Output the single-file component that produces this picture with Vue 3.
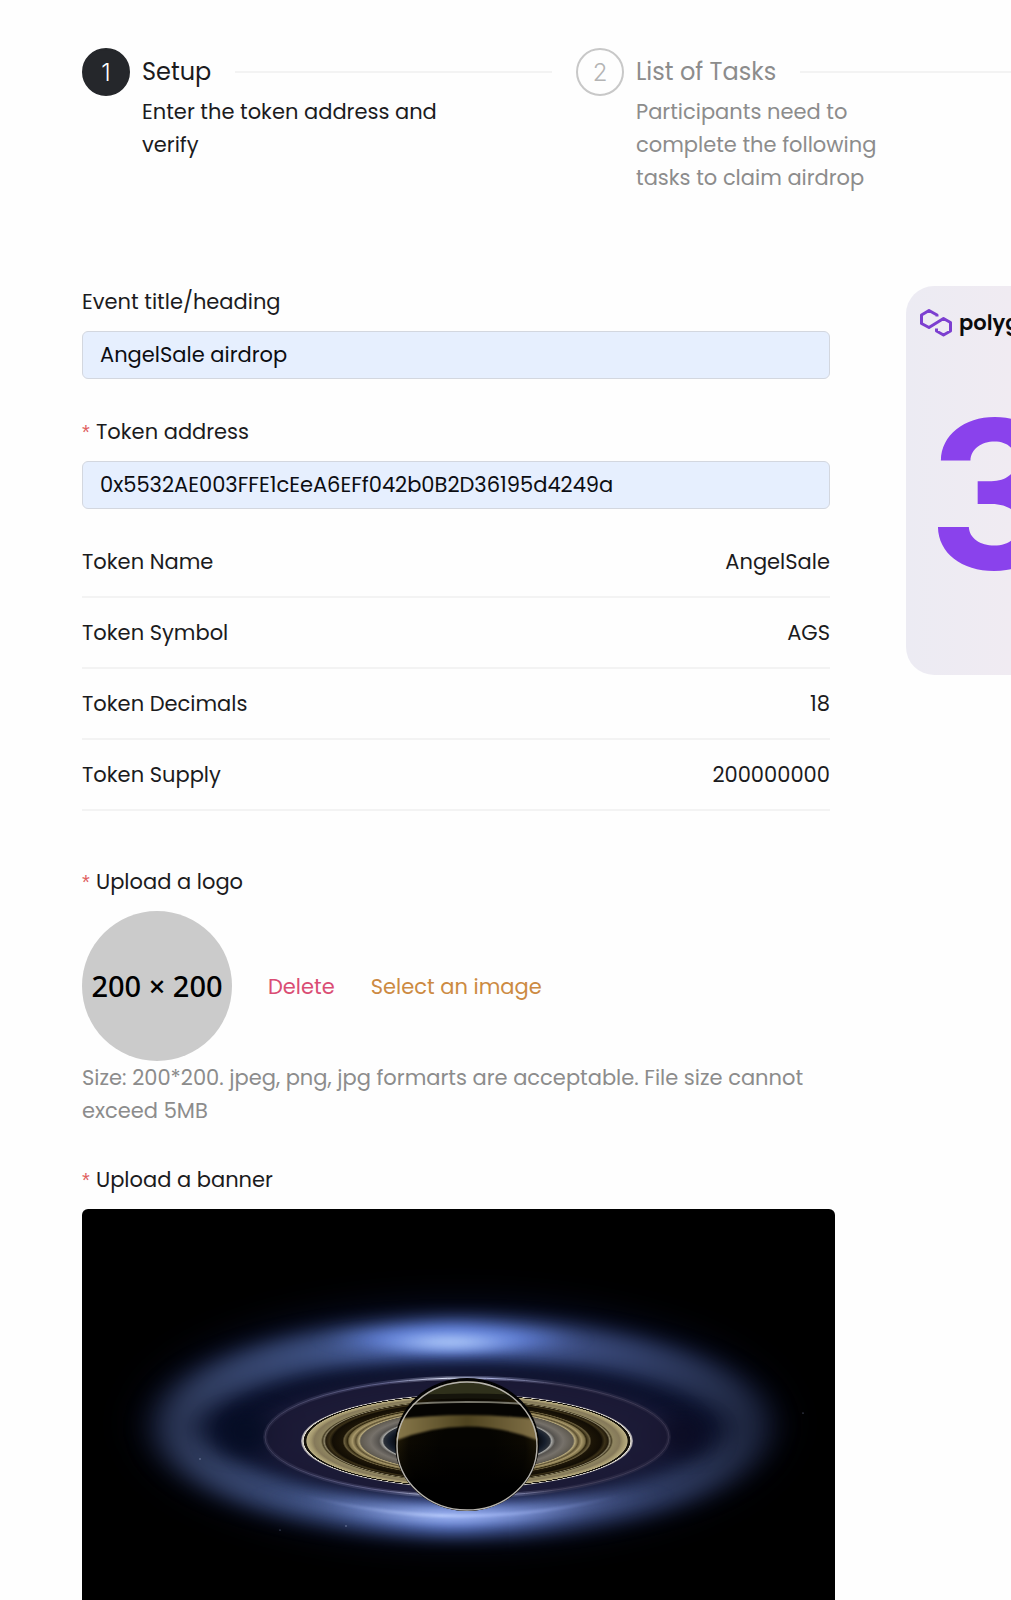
<script setup>
import { ref } from 'vue'

const eventTitle = ref('AngelSale airdrop')
const tokenAddress = ref('0x5532AE003FFE1cEeA6EFf042b0B2D36195d4249a')

const steps = [
  { title: 'Setup', text: 'Enter the token address and verify', active: true },
  {
    title: 'List of Tasks',
    text: 'Participants need to complete the following tasks to claim airdrop',
    active: false
  }
]

const tokenInfo = [
  { name: 'Token Name', value: 'AngelSale' },
  { name: 'Token Symbol', value: 'AGS' },
  { name: 'Token Decimals', value: '18' },
  { name: 'Token Supply', value: '200000000' }
]

// Radial profile of the planet's main rings: [radius, colour]
const ringStops = [
  [0.42, '#05070c'],
  [0.47, '#161e2c'],
  [0.5, '#2b3038'],
  [0.51, '#a5a5a2'],
  [0.53, '#55524e'],
  [0.58, '#76716a'],
  [0.64, '#5f5a50'],
  [0.65, '#b7a97c'],
  [0.67, '#5c5031'],
  [0.69, '#a8986a'],
  [0.71, '#7d7048'],
  [0.72, '#30270f'],
  [0.74, '#6b5f3e'],
  [0.75, '#1c1507'],
  [0.81, '#120d04'],
  [0.83, '#3b3118'],
  [0.85, '#241c0c'],
  [0.86, '#8d8568'],
  [0.87, '#4a4128'],
  [0.88, '#8f8560'],
  [0.92, '#85795a'],
  [0.94, '#a2966c'],
  [0.965, '#b8ad82'],
  [0.97, '#15120b'],
  [0.982, '#15120b'],
  [0.986, '#e8e4d8'],
  [1, '#8c8997']
]
</script>

<template>
  <div class="page">
    <ol class="steps">
      <li v-for="(step, i) in steps" :key="step.title" class="step" :class="{ active: step.active }">
        <span class="step-number">{{ i + 1 }}</span>
        <div class="step-body">
          <div class="step-head">
            <span class="step-title">{{ step.title }}</span>
            <span class="step-rail"></span>
          </div>
          <p class="step-text">{{ step.text }}</p>
        </div>
      </li>
    </ol>

    <main class="content">
      <form class="form" @submit.prevent>
        <div class="field">
          <label class="label" for="event-title">Event title/heading</label>
          <input id="event-title" v-model="eventTitle" class="input" type="text" />
        </div>

        <div class="field">
          <label class="label required" for="token-address">Token address</label>
          <input id="token-address" v-model="tokenAddress" class="input" type="text" spellcheck="false" />
        </div>

        <table class="token-table">
          <tbody>
            <tr v-for="row in tokenInfo" :key="row.name">
              <th scope="row">{{ row.name }}</th>
              <td>{{ row.value }}</td>
            </tr>
          </tbody>
        </table>

        <section class="upload">
          <div class="label required">Upload a logo</div>
          <div class="logo-row">
            <div class="logo-preview">200 × 200</div>
            <button type="button" class="action delete">Delete</button>
            <button type="button" class="action select">Select an image</button>
          </div>
          <p class="hint">Size: 200*200. jpeg, png, jpg formarts are acceptable. File size cannot exceed 5MB</p>
        </section>

        <section class="upload-banner">
          <div class="label required">Upload a banner</div>
          <svg class="banner" viewBox="0 0 753 391" preserveAspectRatio="xMidYMin slice" role="img" aria-label="Planet with rings">
            <defs>
              <filter id="blur-fine" x="-20%" y="-40%" width="140%" height="180%" color-interpolation-filters="sRGB"><feGaussianBlur stdDeviation="1" /></filter>
              <filter id="blur-streak" x="-60%" y="-400%" width="220%" height="900%" color-interpolation-filters="sRGB"><feGaussianBlur stdDeviation="24 6" /></filter>
              <filter id="blur-soft" x="-150%" y="-150%" width="400%" height="400%" color-interpolation-filters="sRGB"><feGaussianBlur stdDeviation="16 9" /></filter>
              <filter id="blur-wide" x="-50%" y="-80%" width="200%" height="260%" color-interpolation-filters="sRGB"><feGaussianBlur stdDeviation="24 18" /></filter>
              <radialGradient id="rings">
                <stop v-for="stop in ringStops" :key="stop[0]" :offset="stop[0]" :stop-color="stop[1]" />
              </radialGradient>
              <linearGradient id="halo">
                <stop offset="0" stop-color="#303c5c" />
                <stop offset="0.25" stop-color="#3c4f80" />
                <stop offset="0.48" stop-color="#6686e0" />
                <stop offset="0.72" stop-color="#39497a" />
                <stop offset="1" stop-color="#232c46" />
              </linearGradient>
              <linearGradient id="glint">
                <stop offset="0.1" stop-color="#7f94d8" stop-opacity="0" />
                <stop offset="0.45" stop-color="#c0d2ff" />
                <stop offset="0.55" stop-color="#a8bcf8" />
                <stop offset="0.9" stop-color="#7f94d8" stop-opacity="0" />
              </linearGradient>
              <linearGradient id="thin">
                <stop offset="0" stop-color="#3c3b58" />
                <stop offset="0.3" stop-color="#63658f" />
                <stop offset="0.45" stop-color="#e4eaff" />
                <stop offset="0.56" stop-color="#aab2e0" />
                <stop offset="0.72" stop-color="#45435f" />
                <stop offset="1" stop-color="#38344e" />
              </linearGradient>
              <radialGradient id="shade" cx="0.5" cy="0.5" r="0.52">
                <stop offset="0.35" stop-color="#050401" />
                <stop offset="0.75" stop-color="#0c0902" />
                <stop offset="1" stop-color="#2b2209" />
              </radialGradient>
              <linearGradient id="night" x1="0" y1="0" x2="0" y2="1">
                <stop offset="0.45" stop-color="#000" stop-opacity="0" />
                <stop offset="0.75" stop-color="#000" />
              </linearGradient>
              <linearGradient id="belt">
                <stop offset="0" stop-color="#8b7b4d" />
                <stop offset="0.5" stop-color="#4e431f" />
                <stop offset="1" stop-color="#85744a" />
              </linearGradient>
              <clipPath id="disc"><ellipse cx="385" cy="237" rx="71" ry="65" /></clipPath>
            </defs>

            <rect width="753" height="391" fill="#000" />
            <ellipse cx="378" cy="214" rx="310" ry="118" fill="#080e28" filter="url(#blur-wide)" />
            <ellipse cx="380" cy="218" rx="282" ry="88" fill="none" stroke="url(#halo)" stroke-width="38" filter="url(#blur-soft)" />
            <ellipse cx="385" cy="228" rx="216" ry="62" fill="#1b1c3a" filter="url(#blur-soft)" />
            <ellipse cx="166" cy="224" rx="24" ry="22" fill="#050d24" filter="url(#blur-soft)" />
            <ellipse cx="600" cy="226" rx="20" ry="20" fill="#0b0b22" filter="url(#blur-soft)" />
            <ellipse cx="370" cy="130" rx="90" ry="10" fill="#5f80dc" filter="url(#blur-streak)" />
            <ellipse cx="368" cy="133" rx="44" ry="6" fill="#c4dcff" filter="url(#blur-streak)" />
            <path d="M160 268 Q380 346 600 268" fill="none" stroke="url(#glint)" stroke-width="10" filter="url(#blur-streak)" />
            <path d="M180 274 Q380 340 580 274" fill="none" stroke="url(#glint)" stroke-width="3" filter="url(#blur-fine)" opacity="0.7" />

            <ellipse cx="385" cy="228" rx="202" ry="59" fill="#1d1a35" fill-opacity="0.7" />
            <ellipse cx="385" cy="228" rx="202" ry="59" fill="none" stroke="url(#thin)" stroke-width="4" opacity="0.35" />
            <ellipse cx="385" cy="228" rx="202" ry="59" fill="none" stroke="url(#thin)" stroke-width="1" />
            <ellipse cx="385" cy="232" rx="166" ry="47" fill="url(#rings)" />

            <ellipse cx="385" cy="235" rx="72" ry="66" fill="#020203" />
            <g clip-path="url(#disc)">
              <rect x="310" y="170" width="150" height="140" fill="url(#shade)" />
              <rect x="310" y="170" width="150" height="140" fill="url(#night)" />
              <rect x="310" y="170" width="150" height="17" fill="#2f301b" />
              <path d="M310 190 Q385 184 460 190" fill="none" stroke="#15140b" stroke-width="5" />
              <path d="M310 196 Q385 190 460 196" fill="none" stroke="#77756a" stroke-width="2" />
              <path d="M310 204 Q385 196 460 204" fill="none" stroke="#050402" stroke-width="12" />
              <path d="M310 211 Q385 201 460 211 V233 Q385 202 310 233 Z" fill="url(#belt)" filter="url(#blur-fine)" />
            </g>
            <ellipse cx="385" cy="237" rx="70" ry="64" fill="none" stroke="#b7b4ae" stroke-width="1.4" />
            <g fill="#7b86a8">
              <circle cx="118" cy="250" r="0.8" />
              <circle cx="264" cy="317" r="0.8" />
              <circle cx="198" cy="321" r="0.6" />
              <circle cx="721" cy="204" r="0.6" />
            </g>
          </svg>
        </section>
      </form>

      <aside class="promo">
        <div class="promo-brand">
          <svg class="promo-logo" viewBox="0 0 32 28" aria-hidden="true">
            <path
              d="M17 7.6V6L9 1.5 1.500 6v8.500L9 18.500 23.500 9.500 30.500 13.500v8.500L23.500 26 16.500 22v-2.500"
              fill="none"
              stroke="#7c3fd0"
              stroke-width="3"
              stroke-linejoin="round"
            />
          </svg>
          <span class="promo-name">polygon</span>
        </div>
        <div class="promo-number">3</div>
      </aside>
    </main>
  </div>
</template>

<style>
body {
  margin: 0;
  background: #fefefe;
}
</style>

<style scoped>
.page {
  box-sizing: border-box;
  padding: 48px 0 0 82px;
  overflow: hidden;
  font-family: Poppins, Inter, 'Liberation Sans', sans-serif;
  font-size: 21px;
  line-height: 33px;
  color: #1b1b1d;
}

.steps {
  display: grid;
  grid-template-columns: minmax(0, 470px) minmax(0, 1fr);
  gap: 24px;
  margin: 0 0 91px;
  padding: 0;
  list-style: none;
}

.step {
  display: flex;
  gap: 12px;
  color: #8c8c8c;
}

.step.active {
  color: #1b1b1d;
}

.step-number {
  box-sizing: border-box;
  flex: none;
  width: 48px;
  height: 48px;
  border: 2px solid #c8c8c8;
  border-radius: 50%;
  font-family: Inter, 'Liberation Sans', sans-serif;
  font-size: 24px;
  font-weight: 300;
  line-height: 46px;
  text-align: center;
  color: #b4b4b4;
}

.active .step-number {
  border-color: #25272b;
  background: #25272b;
  color: #fff;
}

.step-body {
  flex: 1;
  min-width: 0;
}

.step-head {
  display: flex;
  align-items: center;
  gap: 24px;
  height: 47px;
}

.step-title {
  font-size: 24px;
}

.step-rail {
  flex: 1;
  height: 2px;
  background: #f3f3f3;
}

.step-text {
  max-width: 300px;
  margin: 0;
}

.content {
  display: grid;
  grid-template-columns: minmax(0, 753px) minmax(0, 1fr);
  align-items: start;
  gap: 71px;
}

.field,
.token-table {
  max-width: 748px;
}

.field {
  margin-bottom: 36px;
}

.label {
  display: block;
  margin-bottom: 13px;
}

.required::before {
  content: '*';
  display: inline-block;
  width: 14px;
  font-family: 'Liberation Sans', sans-serif;
  font-size: 20px;
  line-height: 20px;
  color: #e0605e;
}

.input {
  display: block;
  box-sizing: border-box;
  width: 100%;
  height: 48px;
  padding: 0 17px 2px;
  border: 1px solid #d3d7df;
  border-radius: 6px;
  background: #e6effe;
  font: inherit;
  color: #0c0d12;
}

.token-table {
  width: 100%;
  margin: -18px 0 54px;
  border-collapse: separate;
  border-spacing: 0;
}

.token-table th,
.token-table td {
  box-sizing: border-box;
  height: 71px;
  padding: 0;
  border-bottom: 2px solid #f3f3f3;
  font-weight: 400;
  text-align: left;
}

.token-table td {
  text-align: right;
}

.upload {
  margin-bottom: 36px;
}

.logo-row {
  display: flex;
  align-items: center;
  gap: 36px;
}

.logo-preview {
  flex: none;
  width: 150px;
  height: 150px;
  border-radius: 50%;
  background: #cbcbcb;
  font-family: 'Noto Sans', sans-serif;
  font-size: 29px;
  font-weight: 500;
  line-height: 150px;
  text-align: center;
  white-space: nowrap;
  color: #000;
}

.action {
  padding: 0;
  border: 0;
  background: none;
  font: inherit;
  cursor: pointer;
}

.delete {
  color: #da4d74;
}

.select {
  color: #cc8a42;
}

.hint {
  margin: 0;
  color: #8c8c8c;
}

.banner {
  display: block;
  box-sizing: border-box;
  width: 100%;
  border-radius: 6px 6px 0 0;
}

.promo {
  box-sizing: border-box;
  height: 389px;
  margin-top: 1px;
  padding: 20px 0 0 14px;
  overflow: hidden;
  border-radius: 28px 0 0 28px;
  background: linear-gradient(90deg, #ecebf3, #f0ebf2);
}

.promo-brand {
  display: flex;
  align-items: center;
  gap: 7px;
}

.promo-logo {
  flex: none;
  width: 32px;
  height: 28px;
}

.promo-name {
  font-weight: 600;
  color: #0b0b0d;
}

.promo-number {
  padding: 52px 0 0 8px;
  font-family: Inter, 'Liberation Sans', sans-serif;
  font-size: 206px;
  font-weight: 700;
  line-height: 206px;
  color: #8a42ec;
}
</style>
